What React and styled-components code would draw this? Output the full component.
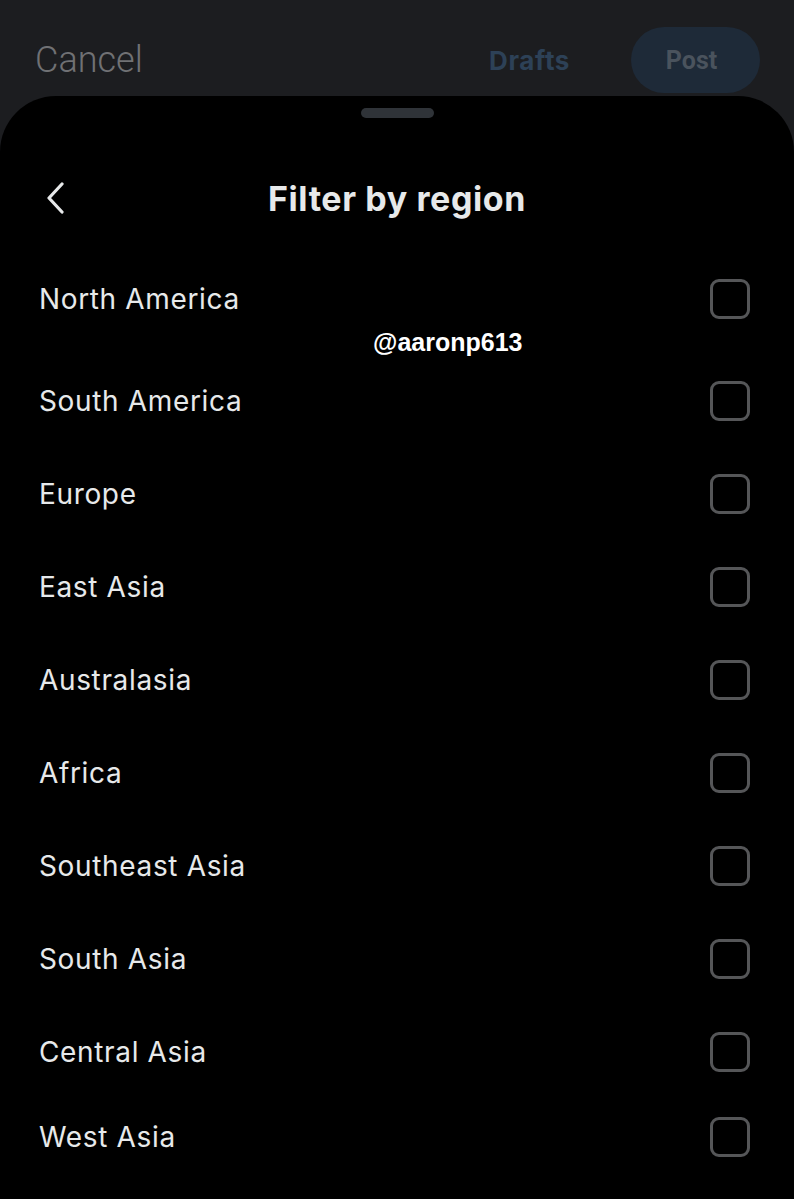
import React from "react";
import styled, { createGlobalStyle } from "styled-components";

const GlobalStyle = createGlobalStyle`
  html, body {
    margin: 0;
    padding: 0;
    background: #1c1d20;
  }
  body {
    font-family: Inter, Roboto, "Noto Sans", sans-serif;
    -webkit-font-smoothing: antialiased;
  }
`;

const Screen = styled.div`
  width: 794px;
  height: 1199px;
  overflow: hidden;
  background: #1c1d20;
  display: flex;
  flex-direction: column;
`;

const TopBar = styled.div`
  height: 96px;
  display: flex;
  align-items: center;
  padding: 24px 34px 0 35px;
  box-sizing: border-box;
  flex-shrink: 0;
`;

const CancelText = styled.div`
  font-family: Roboto, sans-serif;
  font-size: 36px;
  font-weight: 300;
  color: #707174;
  flex: 1;
`;

const DraftsText = styled.div`
  font-size: 26px;
  font-weight: 700;
  color: #2d4157;
  letter-spacing: 0.6px;
  margin-right: 61px;
`;

const PostButton = styled.div`
  width: 129px;
  height: 66px;
  border-radius: 33px;
  background: #1e2a38;
  color: #4a535d;
  font-family: Roboto, sans-serif;
  font-size: 25px;
  font-weight: 700;
  display: flex;
  align-items: center;
  justify-content: center;
  padding-right: 8px;
  box-sizing: border-box;
`;

const Sheet = styled.div`
  flex: 1;
  background: #000;
  border-radius: 56px 56px 0 0;
  display: flex;
  flex-direction: column;
  position: relative;
`;

const Handle = styled.div`
  width: 73px;
  height: 10px;
  border-radius: 5px;
  background: #2f3338;
  margin: 12px auto 0;
`;

const Header = styled.div`
  height: 134px;
  box-sizing: border-box;
  padding-top: 26px;
  display: grid;
  grid-template-columns: 1fr auto 1fr;
  align-items: center;
`;

const BackButton = styled.div`
  justify-self: start;
  margin-left: 45px;
  display: flex;
  align-items: center;
`;

const Title = styled.div`
  font-size: 34px;
  font-weight: 700;
  color: #e7e9ea;
  letter-spacing: 0.6px;
`;

const List = styled.div`
  display: flex;
  flex-direction: column;
`;

const Row = styled.div`
  height: 93px;
  display: flex;
  align-items: center;
  justify-content: space-between;
  padding: 0 44px 0 39px;
  margin-top: ${props => props.offset || 0}px;
`;

const Label = styled.div`
  font-size: 28px;
  font-weight: 400;
  color: #e7e9ea;
  letter-spacing: 0.65px;
`;

const Checkbox = styled.div`
  width: 40px;
  height: 40px;
  box-sizing: border-box;
  border: 3px solid #555658;
  border-radius: 9px;
`;

const Watermark = styled.div`
  position: absolute;
  left: 373px;
  top: 232px;
  font-family: "Liberation Sans", Arial, sans-serif;
  font-size: 25px;
  font-weight: 700;
  color: #fff;
`;

const regions = [
  { name: "North America" },
  { name: "South America", offset: 9 },
  { name: "Europe" },
  { name: "East Asia" },
  { name: "Australasia" },
  { name: "Africa" },
  { name: "Southeast Asia" },
  { name: "South Asia" },
  { name: "Central Asia" },
  { name: "West Asia", offset: -8 }
];

const BackIcon = () => (
  <svg width="22" height="32" viewBox="0 0 22 32">
    <path
      d="M17 2 L4 16 L17 30"
      fill="none"
      stroke="#e7e9ea"
      strokeWidth="3.2"
      strokeLinecap="round"
      strokeLinejoin="round"
    />
  </svg>
);

const App = () => {
  return (
    <Screen>
      <GlobalStyle />
      <TopBar>
        <CancelText>Cancel</CancelText>
        <DraftsText>Drafts</DraftsText>
        <PostButton>Post</PostButton>
      </TopBar>
      <Sheet>
        <Handle />
        <Header>
          <BackButton>
            <BackIcon />
          </BackButton>
          <Title>Filter by region</Title>
          <div />
        </Header>
        <List>
          {regions.map(r => (
            <Row key={r.name} offset={r.offset}>
              <Label>{r.name}</Label>
              <Checkbox />
            </Row>
          ))}
        </List>
        <Watermark>@aaronp613</Watermark>
      </Sheet>
    </Screen>
  );
};

export default App;
